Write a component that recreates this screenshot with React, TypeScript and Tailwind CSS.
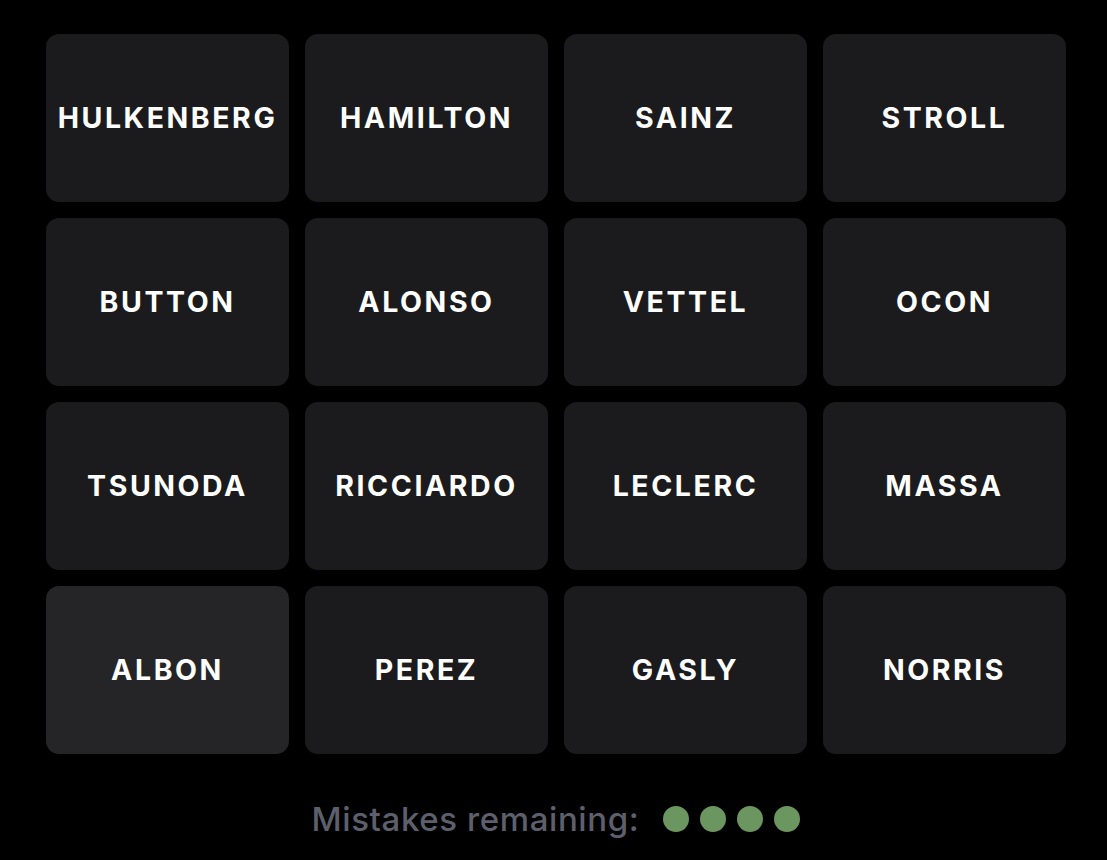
const names = [
  'HULKENBERG', 'HAMILTON', 'SAINZ', 'STROLL',
  'BUTTON', 'ALONSO', 'VETTEL', 'OCON',
  'TSUNODA', 'RICCIARDO', 'LECLERC', 'MASSA',
  'ALBON', 'PEREZ', 'GASLY', 'NORRIS',
];

function Tile({ name, selected }: { name: string; selected?: boolean }) {
  return (
    <button
      className={
        'h-[168px] rounded-[13px] flex items-center justify-center text-white font-bold text-[28.5px] tracking-[0.09em] ' +
        (selected ? 'bg-[#252527]' : 'bg-[#1b1b1d]')
      }
    >
      {name}
    </button>
  );
}

export default function App() {
  return (
    <div
      className="w-[1107px] h-[860px] bg-black flex flex-col items-center pt-[34px] pl-[5px]"
      style={{ fontFamily: 'Inter, "Noto Sans", sans-serif' }}
    >
      <div className="grid grid-cols-4 gap-4 w-[1020px]">
        {names.map((n) => (
          <Tile key={n} name={n} selected={n === 'ALBON'} />
        ))}
      </div>

      <div className="flex items-center h-[36px] mt-[47px] gap-[24px]">
        <span className="text-[#5d606c] text-[33px] leading-none font-medium tracking-[0.6px]">
          Mistakes remaining:
        </span>
        <div className="flex gap-[11px]">
          {[0, 1, 2, 3].map((i) => (
            <span key={i} className="w-[26px] h-[26px] rounded-full bg-[#6b9660]" />
          ))}
        </div>
      </div>
    </div>
  );
}
